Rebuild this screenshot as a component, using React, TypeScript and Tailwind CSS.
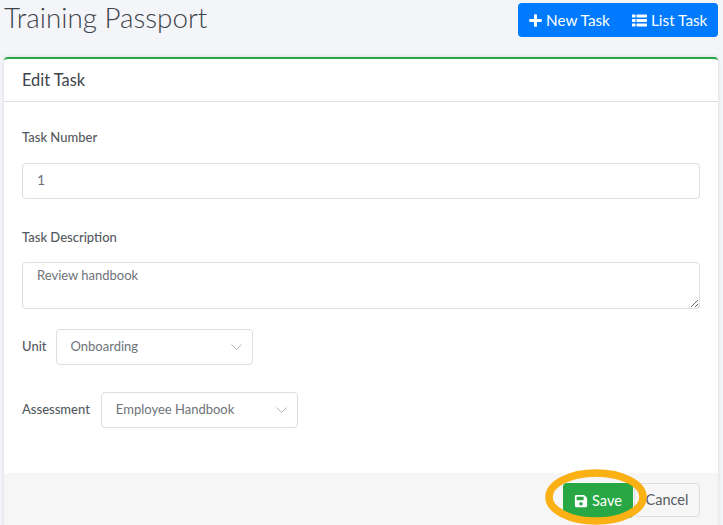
import React from 'react'
import { FaSave } from 'react-icons/fa'

const font = 'font-["Lato","Noto_Sans",sans-serif]'

function Chevron() {
  return (
    <svg className="pointer-events-none absolute right-[11px] top-1/2 -translate-y-1/2" width="11" height="7" viewBox="0 0 11 7" fill="none">
      <path d="M0.5 1 L5.5 6 L10.5 1" stroke="#b4b9c1" strokeWidth="1" />
    </svg>
  )
}

function PlusIcon() {
  return (
    <svg width="13" height="13" viewBox="0 0 13 13" fill="currentColor">
      <path d="M5 1 a.8 .8 0 0 1 .8 -.8 h1.4 a.8 .8 0 0 1 .8 .8 V5 H12 a.8 .8 0 0 1 .8 .8 v1.4 a.8 .8 0 0 1 -.8 .8 H8 V12 a.8 .8 0 0 1 -.8 .8 H5.8 a.8 .8 0 0 1 -.8 -.8 V8 H1 a.8 .8 0 0 1 -.8 -.8 V5.8 a.8 .8 0 0 1 .8 -.8 H5 Z" />
    </svg>
  )
}

function ListIcon() {
  return (
    <svg width="15" height="13" viewBox="0 0 15 13" fill="currentColor">
      <rect x="0" y="0.5" width="3.5" height="3" rx="0.4" />
      <rect x="4.5" y="0.5" width="10.5" height="3" rx="0.4" />
      <rect x="0" y="5" width="3.5" height="3" rx="0.4" />
      <rect x="4.5" y="5" width="10.5" height="3" rx="0.4" />
      <rect x="0" y="9.5" width="3.5" height="3" rx="0.4" />
      <rect x="4.5" y="9.5" width="10.5" height="3" rx="0.4" />
    </svg>
  )
}

function SelectBox({ value, width }: { value: string; width: string }) {
  return (
    <div className={`relative ${width}`}>
      <select
        defaultValue={value}
        className="h-9 w-full appearance-none rounded border border-[#ddddE4] bg-white pl-[14px] text-[13px] text-[#6e7379] outline-none"
      >
        <option>{value}</option>
      </select>
      <Chevron />
    </div>
  )
}

export default function App() {
  return (
    <div className={`h-[525px] w-[723px] overflow-hidden bg-[#f4f5f8] ${font}`}>
      <div className="flex h-[57px] items-start justify-between pl-[4px] pr-[5px] pt-[3px]">
        <h1 className="text-[27.8px] font-light leading-[30px] text-[#3e444a]">Training Passport</h1>
        <div className="flex h-[34px] w-[200px] overflow-hidden rounded bg-[#007bff] text-[15.3px] text-white">
          <button className="flex w-[103px] items-center justify-start gap-[4px] pl-[11px]">
            <PlusIcon />
            <span>New Task</span>
          </button>
          <button className="flex flex-1 items-center gap-[4px] pl-[11px]">
            <ListIcon />
            <span>List Task</span>
          </button>
        </div>
      </div>

      <div className="mx-[4px] h-[480px] w-[714px] rounded-t border-t-[2px] border-[#28a745] bg-white shadow-[0_0_4px_rgba(0,0,0,0.12)]">
        <div className="flex h-[43px] items-center border-b border-[#dfdfe3] px-[18px] text-[16.4px] text-[#3e444a]">
          Edit Task
        </div>

        <div className="h-[371px] px-[18px]">
          <label className="block pt-[27px] text-[13px] font-medium leading-[16px] text-[#555a60]">Task Number</label>
          <input
            defaultValue="1"
            className="mt-[18px] block h-9 w-[678px] rounded border border-[#ddddE4] bg-white px-[14px] pb-[4px] text-[14px] text-[#6e7379] outline-none"
          />

          <label className="block pt-[30px] text-[13px] font-medium leading-[16px] text-[#555a60]">Task Description</label>
          <textarea
            defaultValue="Review handbook"
            className="mt-[17px] block h-[47px] w-[678px] rounded border border-[#ddddE4] bg-white px-[14px] py-[3px] text-[13px] leading-[18px] text-[#6e7379] outline-none"
          />

          <div className="mt-[20px] flex items-center gap-[9px]">
            <span className="text-[13px] font-medium text-[#555a60]">Unit</span>
            <SelectBox value="Onboarding" width="w-[197px]" />
          </div>

          <div className="mt-[27px] flex items-center gap-[11px]">
            <span className="text-[13px] font-medium text-[#555a60]">Assessment</span>
            <SelectBox value="Employee Handbook" width="w-[197px]" />
          </div>
        </div>

        <div className="relative flex h-[52px] items-start justify-end gap-[1px] bg-[#f6f6f7] pr-[18px] pt-[10px]">
          <button className="flex h-[35px] w-[70px] items-center justify-center gap-[4px] rounded bg-[#28a745] text-[14.5px] text-white">
            <FaSave size={14} />
            <span>Save</span>
          </button>
          <button className="h-[34px] w-[66px] rounded border border-[#dedee2] text-[14.5px] text-[#565b61]">Cancel</button>
          <svg className="pointer-events-none absolute left-[539px] top-[-5px]" width="108" height="60" viewBox="0 0 108 60" fill="none">
            <ellipse cx="53" cy="29" rx="47" ry="24" stroke="#fbb013" strokeWidth="7.5" />
          </svg>
        </div>
      </div>
    </div>
  )
}
